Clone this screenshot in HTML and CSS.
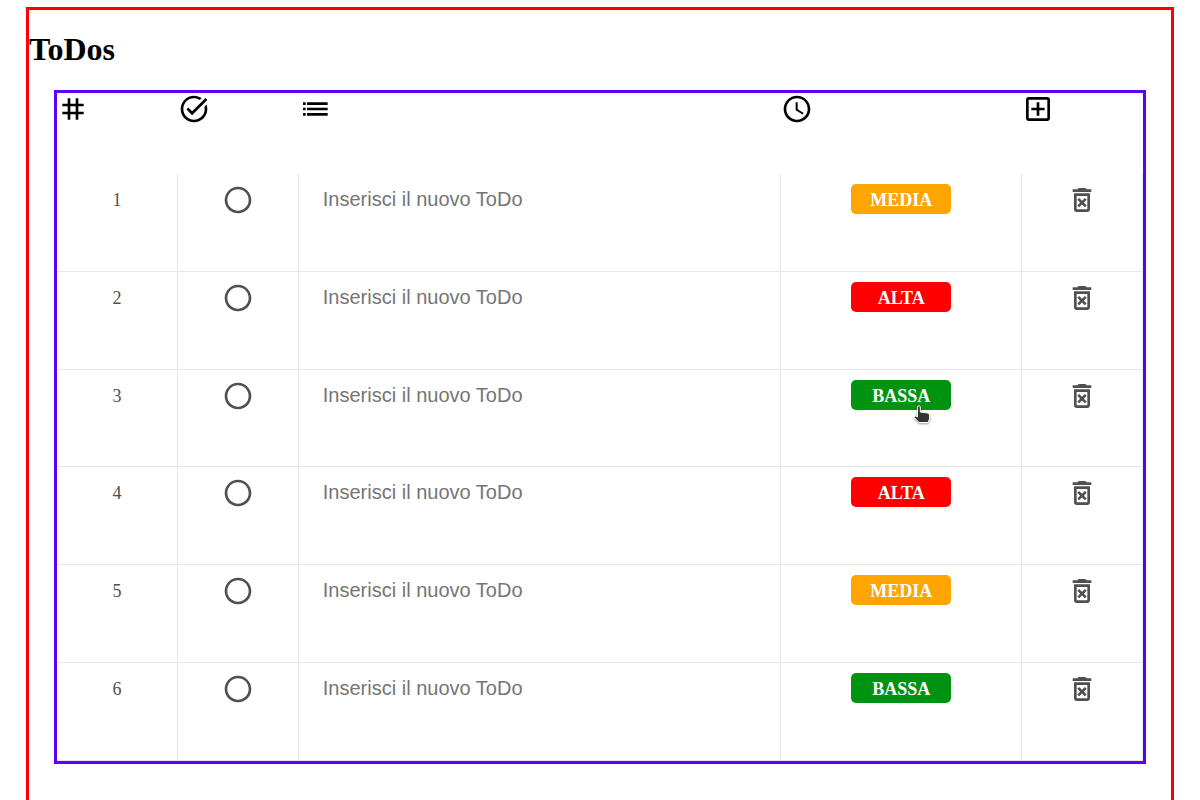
FILE: index.html
```
<!DOCTYPE html>
<html lang="it">
<head>
<meta charset="utf-8">
<title>ToDos</title>
<link rel="stylesheet" href="styles.css">
</head>
<body>
<svg class="sprite" aria-hidden="true">
  <symbol id="ring" viewBox="0 0 24 24"><path d="M12 2C6.480 2 2 6.480 2 12s4.480 10 10 10 10-4.480 10-10S17.520 2 12 2zm0 18c-4.420 0-8-3.580-8-8s3.580-8 8-8 8 3.580 8 8-3.580 8-8 8z"/></symbol>
  <symbol id="trash" viewBox="0 0 24 24"><path d="M14.120 10.470L12 12.590l-2.130-2.120-1.410 1.410L10.590 14l-2.120 2.120 1.410 1.410L12 15.410l2.120 2.120 1.410-1.410L13.410 14l2.120-2.120zM15.500 4l-1-1h-5l-1 1H5v2h14V4zM6 19c0 1.100.9 2 2 2h8c1.100 0 2-.9 2-2V7H6v12zM8 9h8v10H8V9z"/></symbol>
</svg>
<main class="app">
  <h1 class="title">ToDos</h1>
  <section class="board">
    <div class="row head">
      <div><svg class="icon" viewBox="0 0 24 24"><path d="M20 10V8h-4V4h-2v4h-4V4H8v4H4v2h4v4H4v2h4v4h2v-4h4v4h2v-4h4v-2h-4v-4h4zm-6 4h-4v-4h4v4z"/></svg></div>
      <div><svg class="icon" viewBox="0 0 24 24"><path d="M22 5.180L10.590 16.600l-4.240-4.240 1.410-1.410 2.830 2.830 10-10L22 5.180zM19.790 10.220c.13.570.21 1.170.21 1.780 0 4.420-3.580 8-8 8s-8-3.580-8-8 3.580-8 8-8c1.580 0 3.040.46 4.280 1.250l1.440-1.440C16.100 2.670 14.130 2 12 2 6.480 2 2 6.480 2 12s4.480 10 10 10 10-4.480 10-10c0-1.190-.22-2.330-.6-3.390l-1.610 1.610z"/></svg></div>
      <div><svg class="icon" viewBox="0 0 24 24"><path d="M3 13h2v-2H3v2zm0 4h2v-2H3v2zm0-8h2V7H3v2zm3 4h15.500v-2H6v2zm0 4h15.500v-2H6v2zM6 7v2h15.500V7H6z"/></svg></div>
      <div><svg class="icon" viewBox="0 0 24 24"><path d="M11.990 2C6.470 2 2 6.480 2 12s4.470 10 9.990 10C17.520 22 22 17.520 22 12S17.520 2 11.990 2zM12 20c-4.420 0-8-3.580-8-8s3.580-8 8-8 8 3.580 8 8-3.580 8-8 8zm.5-13H11v6l5.250 3.150.75-1.230-4.500-2.670z"/></svg></div>
      <div><svg class="icon" viewBox="0 0 24 24"><path d="M19 3H5c-1.110 0-2 .9-2 2v14c0 1.100.89 2 2 2h14c1.100 0 2-.9 2-2V5c0-1.100-.9-2-2-2zm0 16H5V5h14v14zm-8-2h2v-4h4v-2h-4V7h-2v4H7v2h4z"/></svg></div>
    </div>
    <div class="row">
      <div class="cell num">1</div><div class="cell"><svg class="icon"><use href="#ring"/></svg></div>
      <div class="cell"><input class="text" placeholder="Inserisci il nuovo ToDo"></div>
      <div class="cell"><span class="badge media">MEDIA</span></div><div class="cell"><svg class="icon"><use href="#trash"/></svg></div>
    </div>
    <div class="row">
      <div class="cell num">2</div><div class="cell"><svg class="icon"><use href="#ring"/></svg></div>
      <div class="cell"><input class="text" placeholder="Inserisci il nuovo ToDo"></div>
      <div class="cell"><span class="badge alta">ALTA</span></div><div class="cell"><svg class="icon"><use href="#trash"/></svg></div>
    </div>
    <div class="row">
      <div class="cell num">3</div><div class="cell"><svg class="icon"><use href="#ring"/></svg></div>
      <div class="cell"><input class="text" placeholder="Inserisci il nuovo ToDo"></div>
      <div class="cell"><span class="badge bassa">BASSA<svg class="pointer" viewBox="0 0 20 22"><path d="M4.500 3Q4.500 1.800 5.900 1.800T7.300 3V8L14.500 9Q16.500 9.400 16.500 11V15L15 18.500H6L1.300 13.500Q.8 11.300 3 12L4.500 13z"/></svg></span></div><div class="cell"><svg class="icon"><use href="#trash"/></svg></div>
    </div>
    <div class="row">
      <div class="cell num">4</div><div class="cell"><svg class="icon"><use href="#ring"/></svg></div>
      <div class="cell"><input class="text" placeholder="Inserisci il nuovo ToDo"></div>
      <div class="cell"><span class="badge alta">ALTA</span></div><div class="cell"><svg class="icon"><use href="#trash"/></svg></div>
    </div>
    <div class="row">
      <div class="cell num">5</div><div class="cell"><svg class="icon"><use href="#ring"/></svg></div>
      <div class="cell"><input class="text" placeholder="Inserisci il nuovo ToDo"></div>
      <div class="cell"><span class="badge media">MEDIA</span></div><div class="cell"><svg class="icon"><use href="#trash"/></svg></div>
    </div>
    <div class="row">
      <div class="cell num">6</div><div class="cell"><svg class="icon"><use href="#ring"/></svg></div>
      <div class="cell"><input class="text" placeholder="Inserisci il nuovo ToDo"></div>
      <div class="cell"><span class="badge bassa">BASSA</span></div><div class="cell"><svg class="icon"><use href="#trash"/></svg></div>
    </div>
  </section>
</main>
</body>
</html>
```
FILE: styles.css
```
* { box-sizing: border-box; }
html, body { height: 100%; }
body { margin: 0; padding: 7px 26px 0; background: #fff; font-family: "Liberation Serif", "Times New Roman", serif; }
.sprite { display: none; }
.app { height: 100%; border: 3px solid #f00; border-bottom: 0; }
.title { margin: 0; padding: 21px 0 22px; font-size: 32px; line-height: 37px; color: #000; }
.board { margin: 0 25px; border: 3px solid #5a00ff; height: 674px; display: grid; grid-template-rows: 81.200px repeat(6, 97.750px); }
.row { display: grid; grid-template-columns: 120.900px 120.900px 4fr 2fr 120.670px; }
.icon { display: block; width: 32px; height: 32px; fill: currentColor; }
.cell { display: flex; justify-content: center; align-items: flex-start; padding-top: 10px; min-width: 0; border-right: 1px solid #e4e8e9; border-bottom: 1px solid #e4e8e9; color: #505050; }
.num { font-size: 18px; line-height: 32px; }
.text { width: 100%; height: 30px; margin: 0; padding: 0 24px; border: 0; background: transparent; font: 20px/30px "Liberation Sans", Arial, sans-serif; }
.text::placeholder { color: #757575; opacity: 1; }
.badge { position: relative; width: 100px; height: 30px; border-radius: 5px; text-align: center; font-size: 18px; line-height: 32px; font-weight: bold; color: #fff; }
.media { background: #ffa500; }
.alta { background: #f00; }
.bassa { background: #009312; }
.pointer { position: absolute; left: 62px; top: 24px; width: 20px; height: 22px; fill: #333; stroke: #fff; stroke-width: 1; filter: drop-shadow(0 1px 1px rgba(0, 0, 0, .4)); }
```
